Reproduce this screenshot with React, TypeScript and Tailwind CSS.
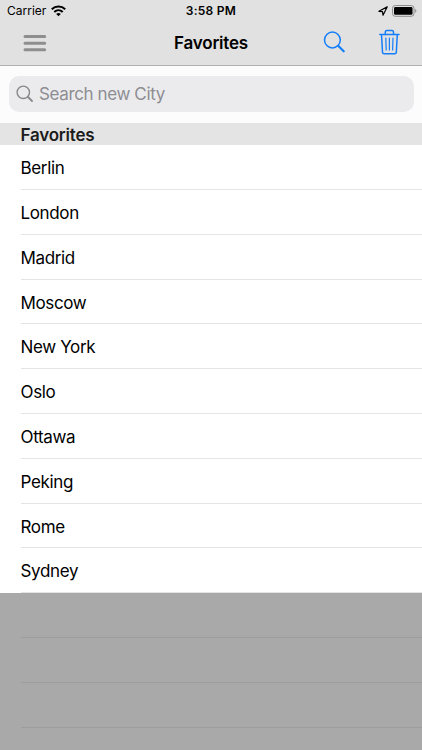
const cities = ['Berlin', 'London', 'Madrid', 'Moscow', 'New York', 'Oslo', 'Ottawa', 'Peking', 'Rome', 'Sydney'];

function StatusBar() {
  return (
    <div className="grid h-[22px] grid-cols-3 items-center pr-[5px] pl-[7px] text-[12px] leading-[20px]">
      <div className="flex items-center gap-[5px]">
        <span>Carrier</span>
        <svg className="-mt-px" width="15" height="12" viewBox="0 0 15 12" fill="none" stroke="#000" strokeWidth="2">
          <path d="M0.8 4.3C4.5 0.6 10.5 0.6 14.2 4.3" />
          <path d="M3.3 7C5.7 4.7 9.3 4.7 11.7 7" />
          <path d="M5.2 8.9C6.5 7.7 8.5 7.7 9.8 8.9L7.5 11.3Z" fill="#000" stroke="none" />
        </svg>
      </div>
      <span className="pr-[2px] text-center font-semibold tracking-[0.25px]">3:58 PM</span>
      <div className="-mt-px flex items-center justify-end gap-[4px]">
        <svg width="10" height="10" viewBox="0 0 10 10" fill="none" stroke="#000" strokeWidth="1.2" strokeLinejoin="round">
          <path d="M9.2 0.9L0.9 5.3L4.5 5.6L5 9.2Z" />
        </svg>
        <svg width="25" height="12" viewBox="0 0 25 12">
          <rect x="0.5" y="0.5" width="21.5" height="10.8" rx="2.8" fill="none" stroke="#8b8b8b" />
          <rect x="2" y="2" width="18.5" height="7.8" rx="1.4" />
          <path d="M23.2 4C24.8 4.6 24.8 7.2 23.2 7.8Z" fill="#8b8b8b" />
        </svg>
      </div>
    </div>
  );
}

function NavigationBar() {
  return (
    <div className="grid h-[43px] grid-cols-3 items-center pr-[22px] pl-[23px]">
      <svg className="-mt-px" width="24" height="18" viewBox="0 0 24 18" stroke="#8e8e8e" strokeWidth="3" strokeLinecap="round">
        <path d="M2 2.6H21.7M2 9.2H21.7M2 15.7H21.7" />
      </svg>
      <h1 className="-mt-[2px] pr-px text-center text-[17px] leading-[22px] font-semibold tracking-[-0.2px]">Favorites</h1>
      <div className="-mt-[3px] flex items-center justify-end gap-[33px]">
        <svg width="22" height="22" viewBox="0 0 22 22" fill="none" stroke="#147efb" strokeLinecap="round">
          <circle cx="9.4" cy="9" r="7.9" strokeWidth="1.5" />
          <path d="M15.2 14.8L20.7 20.3" strokeWidth="2.2" />
        </svg>
        <svg width="22" height="26" viewBox="0 0 22 26" fill="none" stroke="#147efb" strokeWidth="1.5" strokeLinecap="round" strokeLinejoin="round">
          <path d="M1.8 5.5H21M3.5 5.5L4.5 23.3Q4.7 24.7 6.1 24.7H16.7Q18.1 24.7 18.3 23.3L19.3 5.5" />
          <path d="M7.3 5.5V3Q7.3 1.5 8.8 1.5H14Q15.5 1.5 15.5 3V5.5" />
          <path d="M7.8 9L8.2 21M11.4 9V21M15 9L14.6 21" strokeWidth="1.2" />
        </svg>
      </div>
    </div>
  );
}

export default function App() {
  return (
    <div className="flex h-[750px] w-[422px] flex-col overflow-hidden bg-[#a9a9a9] font-[Inter,'Liberation_Sans',sans-serif] text-black">
      <header className="h-[66px] shrink-0 border-b border-[#b1b1b1] bg-[#e1e1e1]">
        <StatusBar />
        <NavigationBar />
      </header>
      <div className="h-[57px] shrink-0 bg-[#fcfcfc] px-[8.5px] pt-[10px]">
        <label className="flex h-9 items-center rounded-[10px] bg-[#ebebed] pl-[7.5px]">
          <svg width="18" height="18" viewBox="0 0 18 18" fill="none" stroke="#88888c" strokeLinecap="round">
            <circle cx="7.3" cy="7.3" r="6.2" strokeWidth="1.4" />
            <path d="M12 12L16 16" strokeWidth="1.8" />
          </svg>
          <input
            className="ml-[5px] min-w-0 flex-1 bg-transparent text-[17px] leading-[22px] tracking-[-0.38px] outline-none placeholder:text-[#8d8d92]"
            placeholder="Search new City"
          />
        </label>
      </div>
      <h2 className="h-[22.2px] shrink-0 bg-[#e4e4e4] pl-[20.5px] text-[17px] leading-[24px] font-semibold tracking-[-0.2px] text-[#1c1c1c]">Favorites</h2>
      <ul className="shrink-0 bg-white">
        {cities.map((city) => (
          <li key={city} className="h-[44.8px] pl-[20.5px]">
            <div className="h-full border-b border-[#e4e4e5] text-[17px] leading-[46.4px] tracking-[-0.35px]">{city}</div>
          </li>
        ))}
      </ul>
      <div className="pl-[20.5px]">
        <div className="h-[44.8px] border-b border-[#9d9d9f]" />
        <div className="h-[44.8px] border-b border-[#9d9d9f]" />
        <div className="h-[44.8px] border-b border-[#9d9d9f]" />
      </div>
    </div>
  );
}
